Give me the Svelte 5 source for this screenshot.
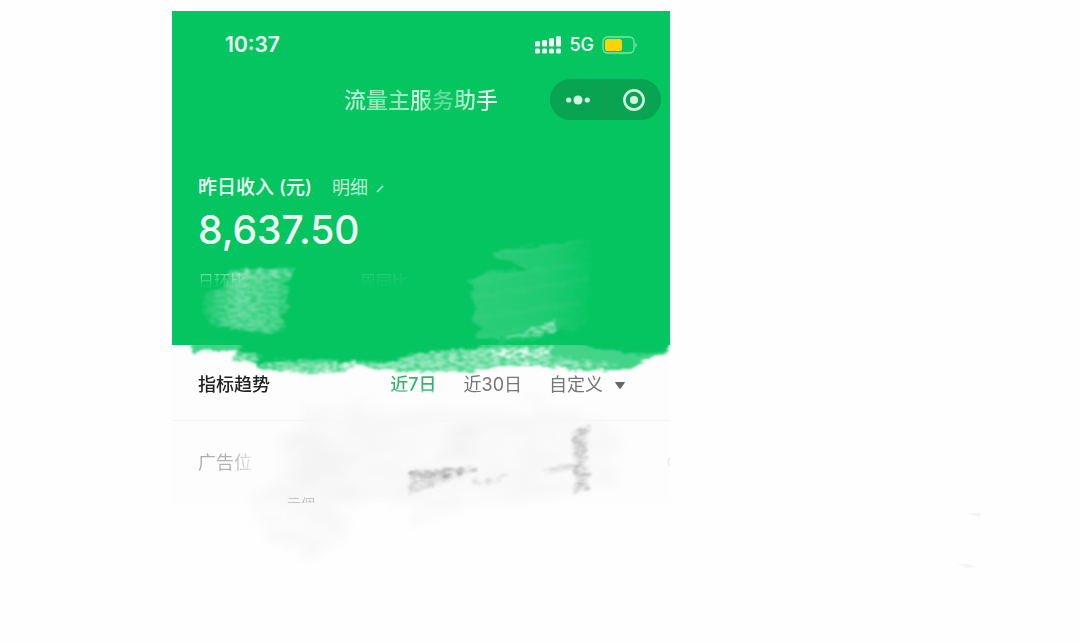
<script>
  const ranges = [
    { id: 'week', label: '近7日' },
    { id: 'month', label: '近30日' }
  ];
  let active = $state('week');
</script>

<main class="page">
  <section class="phone">
    <svg class="paint" viewBox="172 11 498 560" aria-hidden="true">
      <defs>
        <filter id="chalk" x="-10%" y="-20%" width="120%" height="140%" color-interpolation-filters="sRGB">
          <feTurbulence type="fractalNoise" baseFrequency="0.14 0.34" numOctaves="4" seed="4" result="n" />
          <feDisplacementMap in="SourceGraphic" in2="n" scale="9" xChannelSelector="R" yChannelSelector="G" result="d" />
          <feColorMatrix in="n" type="matrix" values="0 0 0 0 0  0 0 0 0 0  0 0 0 0 0  0 0 3 0 -0.9" result="a" />
          <feComposite in="d" in2="a" operator="in" />
          <feGaussianBlur stdDeviation="1" />
        </filter>
        <filter id="edge" x="-10%" y="-20%" width="120%" height="140%" color-interpolation-filters="sRGB">
          <feTurbulence type="fractalNoise" baseFrequency="0.06 0.3" numOctaves="3" seed="9" result="n" />
          <feDisplacementMap in="SourceGraphic" in2="n" scale="10" xChannelSelector="R" yChannelSelector="G" />
          <feGaussianBlur stdDeviation="0.9" />
        </filter>
        <filter id="smoke" x="-20%" y="-20%" width="140%" height="140%" color-interpolation-filters="sRGB">
          <feTurbulence type="fractalNoise" baseFrequency="0.02 0.06" numOctaves="2" seed="2" result="n" />
          <feDisplacementMap in="SourceGraphic" in2="n" scale="36" xChannelSelector="R" yChannelSelector="G" result="d" />
          <feColorMatrix in="n" type="matrix" values="0 0 0 0 0  0 0 0 0 0  0 0 0 0 0  0 0 2 0 -0.2" result="a" />
          <feComposite in="d" in2="a" operator="in" />
          <feGaussianBlur stdDeviation="4" />
        </filter>
        <linearGradient id="fadeLeft" x1="0" x2="1">
          <stop offset="0" stop-color="#fff" stop-opacity="0.04" />
          <stop offset="0.4" stop-color="#fff" stop-opacity="0.3" />
          <stop offset="1" stop-color="#fff" stop-opacity="0.16" />
        </linearGradient>
        <linearGradient id="fadeRight" x1="0" x2="1">
          <stop offset="0" stop-color="#fff" stop-opacity="0.16" />
          <stop offset="0.6" stop-color="#fff" stop-opacity="0.11" />
          <stop offset="1" stop-color="#fff" stop-opacity="0.02" />
        </linearGradient>
      </defs>

      <!-- pale strokes on the green header -->
      <g filter="url(#chalk)">
        <path fill="url(#fadeLeft)" d="M229 270L294 268L290 279L282 284L291 289L284 300L291 306L280 316L286 326L272 334L212 326L202 312L203 294L226 286Z" />
        <path fill="#fff" opacity="0.22" d="M236 270L294 268L289 278L232 281Z" />
      </g>
      <g filter="url(#edge)">
        <path fill="url(#fadeLeft)" opacity="0.7" d="M229 270L294 268L290 279L282 284L291 289L284 300L291 306L280 316L286 326L272 334L212 326L202 312L203 294L226 286Z" />
        <path fill="url(#fadeRight)" d="M492 252L593 240L592 262L587 300L588 326L552 332L492 343L474 339L482 327L472 322L477 309L470 296L476 288L466 280L482 273L526 268L495 258Z" />
      </g>
      <g filter="url(#edge)" fill="none" stroke="#fff" stroke-opacity="0.03" stroke-width="6">
        <path d="M494 254L592 241M470 281L582 264M474 297L588 280M475 318L580 303M476 338L570 320" />
      </g>
      <path filter="url(#chalk)" fill="#fff" opacity="0.5" d="M490 342L522 333L554 320L557 331L539 338L512 343L488 347Z" />

      <!-- ragged green edge below the header -->
      <g filter="url(#edge)" fill="#05c561">
        <path opacity="0.75" d="M188 338H668V352L644 360L630 370L578 370L520 364L462 372L410 372L360 366L322 374L258 369L252 362L232 359L238 350L192 352Z" />
        <path d="M240 338H505L470 350L420 353L385 363L340 361L300 359L258 363L240 354Z" />
        <path d="M560 338H668V351L640 355L604 350Z" />
      </g>
      <g filter="url(#chalk)" fill="#fff">
        <path opacity="0.5" d="M262 365L300 361L344 364L388 362L420 353L460 349L505 347L550 346L548 355L590 362L620 364L575 368L520 364L450 374L400 370L350 374L300 374Z" />
        <path opacity="0.8" d="M490 350L528 348L552 347L548 356L508 358L480 354Z" />
        <path opacity="0.5" d="M236 350L262 356L254 366L226 362Z" />
        <path opacity="0.8" d="M325 366L356 361L360 367L328 373Z" />
      </g>

      <!-- grey smudges over the list -->
      <g filter="url(#smoke)">
        <path fill="#f7f7f7" d="M300 416L350 402L420 414L540 400L580 412L620 430L606 490L540 494L470 506L420 526L410 502L346 508L344 538L310 556L290 540L255 516L250 500L286 470Z" />
        <path fill="#f2f2f2" d="M424 435L476 424L474 450L434 456Z" />
        <path fill="#f4f4f4" d="M286 430L354 424L352 498L300 496L290 480Z" />
      </g>
      <g filter="url(#chalk)" fill="#777">
        <path opacity="0.42" d="M410 471L476 467L477 471L446 477L409 478Z" />
        <path opacity="0.22" d="M411 472L465 470L442 484L408 494Z" />
        <path opacity="0.2" d="M472 480L508 475L502 481L475 486Z" />
        <path opacity="0.2" d="M544 469L578 461L580 470L546 473Z" />
        <path opacity="0.36" d="M571 430L590 426L588 434L583 440L591 446L583 455L589 458L580 465L591 472L582 484L592 485L588 490L572 494L578 481L572 472L580 464L572 455L577 446L570 439L579 433Z" />
      </g>
      <path filter="url(#edge)" fill="#999" opacity="0.1" d="M411 471L476 467L460 478L408 494ZM571 430L590 426L586 446L588 470L588 490L572 494L576 470L544 472L574 462Z" />
      <path fill="#f4f4f4" d="M968 513L981 513L979 517L973 515ZM957 564L967 564L976 567L967 568Z" />
      <path fill="none" stroke="#e9e9e9" stroke-width="1.2" d="M670 458Q666 462 670 466" />
    </svg>

    <header class="hero">
      <div class="status">
        <time class="clock">10:37</time>
        <div class="radio">
          <svg width="26" height="18" viewBox="0 0 26 18" fill="#f1fff5" role="img" aria-label="信号">
            <rect x="0" y="5" width="5" height="5.6" rx="1.5" /><rect x="7" y="4" width="5" height="6.6" rx="1.5" />
            <rect x="14" y="2" width="5" height="8.6" rx="1.5" /><rect x="21" y="0" width="5" height="10.6" rx="1.5" />
            <rect x="0" y="12.6" width="5" height="5" rx="1.7" /><rect x="7" y="12.6" width="5" height="5" rx="1.7" />
            <rect x="14" y="12.6" width="5" height="5" rx="1.7" /><rect x="21" y="12.6" width="5" height="5" rx="1.7" />
          </svg>
          <span class="net">5G</span>
          <svg width="36" height="18" viewBox="0 0 36 18" role="img" aria-label="电量">
            <rect x="1" y="1" width="31" height="16" rx="4.5" fill="none" stroke="#7fe3a8" stroke-width="1.3" />
            <rect x="3" y="3" width="17" height="12" rx="2.5" fill="#ffd20a" />
            <path d="M33.5 6.5Q36 9 33.5 11.5Z" fill="#a5ecc2" />
          </svg>
        </div>
      </div>

      <div class="nav">
        <h1>流量主服务助手</h1>
        <div class="capsule">
          <button type="button" aria-label="更多">
            <svg width="24" height="10" viewBox="0 0 24 10" fill="#d0f2de"><circle cx="2.7" cy="5" r="2.6" /><circle cx="12" cy="5" r="4.5" /><circle cx="21.3" cy="5" r="2.6" /></svg>
          </button>
          <button type="button" aria-label="关闭">
            <svg width="22" height="22" viewBox="0 0 22 22"><circle cx="11" cy="11" r="9.6" fill="none" stroke="#d0f2de" stroke-width="2.6" /><circle cx="11" cy="11" r="4.1" fill="#d0f2de" /></svg>
          </button>
        </div>
      </div>

      <div class="income">
        <div class="caption">
          <h2>昨日收入 (元)</h2>
          <a href="#detail">明细
            <svg width="8" height="10" viewBox="0 0 8 10" aria-hidden="true"><path d="M1 9L7 3" stroke="#b9efcf" stroke-width="1.6" /><path d="M5 1L7 3" stroke="#4fd58c" stroke-width="1" /></svg>
          </a>
        </div>
        <strong>8,637.50</strong>
        <div class="compare"><span>日环比</span><span class="ghost">周同比</span></div>
      </div>
    </header>

    <div class="trend">
      <h2>指标趋势</h2>
      <div class="filters">
        {#each ranges as range}
          <button type="button" class:active={active === range.id} aria-pressed={active === range.id} onclick={() => (active = range.id)}>{range.label}</button>
        {/each}
        <div class="custom">
          <select aria-label="自定义"><option>自定义</option></select>
          <svg width="10" height="7" viewBox="0 0 10 7" aria-hidden="true"><path d="M0 .5Q0 0 1 0H9Q10 0 10 .5L5.7 6.4Q5 7 4.3 6.4Z" fill="#666" /></svg>
        </div>
      </div>
    </div>

    <div class="slots">
      <span class="slot">广告位</span>
      <span class="cut">示個</span>
    </div>
  </section>
</main>

<style>
  :global(body) {
    margin: 0;
    background: #fefefe;
  }
  .page {
    display: grid;
    grid-template-columns: 172fr 498fr 410fr;
    padding-top: 11px;
    overflow: hidden;
    min-height: calc(100vh - 11px);
    font-family: Inter, "Noto Sans CJK SC", sans-serif;
    font-size: 18px;
    line-height: 24px;
    color: #f1fff5;
  }
  .phone {
    grid-column: 2;
    position: relative;
    align-self: start;
    background: #fdfdfd;
  }
  .paint {
    position: absolute;
    inset: 0 0 auto;
    width: 100%;
    z-index: 1;
    overflow: visible;
    pointer-events: none;
  }
  h1, h2 {
    margin: 0;
    font-weight: 500;
  }
  button, select {
    border: 0;
    padding: 0;
    background: none;
    font: inherit;
    color: inherit;
    cursor: pointer;
  }
  .hero {
    background: #05c561;
    padding-bottom: 52px;
  }
  .status {
    display: flex;
    justify-content: space-between;
    align-items: center;
    height: 68px;
    padding: 0 32px 0 53px;
  }
  .clock {
    font-size: 21px;
    font-weight: 600;
  }
  .radio {
    display: flex;
    align-items: center;
    gap: 8px;
  }
  .net {
    font-weight: 500;
  }
  .nav {
    display: grid;
    grid-template-columns: 1fr auto 1fr;
    align-items: center;
    height: 41px;
  }
  h1 {
    grid-column: 2;
    font-size: 22px;
    line-height: 32px;
    color: transparent;
    background: linear-gradient(90deg, #c6f3d8 0 12%, #8fe5b3 24%, #8fe5b3 36%, #dcfbe8 48%, #5fda94 58%, #6bdc9a 70%, #b5f0cc 78%, #e6fdee 90%);
    background-clip: text;
  }
  .capsule {
    justify-self: end;
    display: grid;
    grid-template-columns: 1fr 1fr;
    width: 111px;
    height: 41px;
    margin-right: 9px;
    border-radius: 21px;
    background: #08a451;
  }
  .capsule button {
    display: grid;
    place-items: center;
  }
  .capsule button + button {
    border-left: 1px solid #1b9a54;
  }
  .income {
    padding: 56px 26px 0;
  }
  .caption {
    display: flex;
    gap: 20px;
  }
  .caption h2 {
    font-size: 19px;
  }
  .caption a {
    display: flex;
    align-items: center;
    gap: 8px;
    color: #b9f0cf;
    text-decoration: none;
  }
  strong {
    display: block;
    padding-top: 6px;
    font-size: 39px;
    line-height: 48px;
    font-weight: 500;
  }
  .compare {
    display: grid;
    grid-template-columns: 162fr 284fr;
    padding-top: 15px;
    font-size: 16px;
    color: #6bdc9a;
  }
  .compare span {
    mask-image: linear-gradient(#000 20%, transparent 80%);
  }
  .compare .ghost {
    opacity: 0.3;
  }
  .trend {
    display: flex;
    justify-content: space-between;
    align-items: center;
    height: 70px;
    padding: 5px 45px 0 26px;
    border-bottom: 1px solid #f2f2f2;
    color: #777;
  }
  .trend h2, .filters {
    position: relative;
    z-index: 2;
  }
  .trend h2 {
    color: #222;
    font-size: 18px;
  }
  .filters, .custom {
    display: flex;
    align-items: center;
  }
  .filters {
    gap: 27px;
  }
  .custom {
    gap: 12px;
  }
  .active {
    font-weight: 500;
    color: transparent;
    background: linear-gradient(#2cb56d 65%, #a5dfbf 85%);
    background-clip: text;
  }
  select {
    appearance: none;
    outline: none;
  }
  .slots {
    position: relative;
    z-index: 2;
    display: grid;
    grid-template-columns: auto 1fr;
    gap: 35px;
    height: 82px;
    padding-left: 26px;
    overflow: hidden;
  }
  .slot {
    align-self: start;
    margin-top: 30px;
    color: transparent;
    background: linear-gradient(90deg, #aaa, #b3b3b3 60%, #e4e4e4);
    background-clip: text;
  }
  .cut {
    padding-top: 71px;
    font-size: 14px;
    color: #c6c6c6;
  }
</style>
